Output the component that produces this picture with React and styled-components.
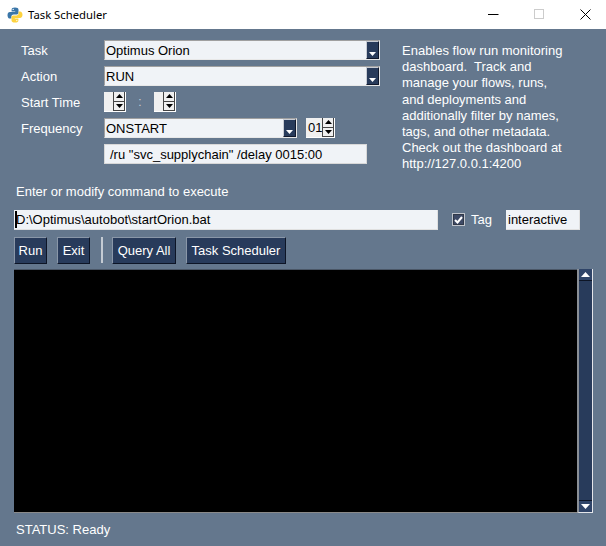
import React from 'react';
import styled, { createGlobalStyle } from 'styled-components';

const GlobalStyle = createGlobalStyle`
  html, body { margin: 0; padding: 0; background: #64778d; }
  * { box-sizing: border-box; }
`;

const Window = styled.div`
  width: 606px;
  height: 546px;
  display: flex;
  flex-direction: column;
  overflow: hidden;
  background: #64778d;
  color: #fff;
  font-family: "Liberation Sans", Arial, sans-serif;
  font-size: 13px;
`;

const TitleBar = styled.div`
  height: 29px;
  flex: none;
  display: flex;
  align-items: center;
  background: #fff;
  color: #000;
  font-family: "Noto Sans", sans-serif;
  font-size: 11.3px;
  padding-left: 7px;
`;

const AppName = styled.span`
  margin-left: 5px;
  flex: 1;
`;

const WinButton = styled.div`
  width: 46px;
  height: 29px;
  flex: none;
  display: flex;
  align-items: center;
  justify-content: center;
  &:last-child { margin-right: -2px; }
`;

const Top = styled.div`
  display: flex;
  padding: 11px 0 0 21px;
`;

const Form = styled.div`
  width: 381px;
  flex: none;
  display: flex;
  flex-direction: column;
  gap: 6px;
`;

const Row = styled.div`
  display: flex;
  align-items: center;
  height: 20px;
`;

const Label = styled.div`
  width: 83px;
  flex: none;
`;

const Combo = styled.div`
  width: ${p => p.$w}px;
  height: 20px;
  flex: none;
  display: flex;
  align-items: center;
  justify-content: space-between;
  padding-left: 1px;
  color: #000;
  background: #f0f3f7;
  border: 1px solid #a0a0a0;
  border-color: #a0a0a0 #e8e8e8 #e8e8e8 #a0a0a0;
`;

const ComboArrow = styled.div`
  width: 13px;
  height: 18px;
  background: #283b5b;
  border: 1px solid #10182c;
  border-top-color: #c8ccd4;
  border-left-color: #c8ccd4;
  display: flex;
  align-items: flex-end;
  justify-content: center;
  padding-bottom: 2px;
`;

const Spinner = styled.div`
  width: ${p => p.$w}px;
  height: 20px;
  flex: none;
  margin-left: ${p => p.$ml || 0}px;
  display: flex;
  justify-content: space-between;
  color: #000;
  background: #f0f0f0;
  border-right: 1px solid #fff;
  border-bottom: 1px solid #fff;
  padding-left: 2px;
  line-height: 19px;
`;

const SpinButtons = styled.div`
  width: 12px;
  height: 100%;
  display: flex;
  flex-direction: column;
  background: #f0f0f0;
  border: 1px solid #444;
  border-top: none;
`;

const SpinPart = styled.div`
  flex: 1;
  display: flex;
  align-items: center;
  justify-content: center;
  &:first-child { border-bottom: 1px solid #444; }
`;

const Colon = styled.span`
  width: 28px;
  text-align: center;
  color: #c8ccd4;
  font-size: 12px;
`;

const ArgsField = styled.div`
  width: 263px;
  height: 20px;
  margin-left: 83px;
  padding-left: 5px;
  display: flex;
  align-items: center;
  color: #000;
  background: #f0f3f7;
  border: 1px solid #d8d8d8;
`;

const Description = styled.p`
  margin: 0;
  padding-top: 3px;
  width: 168px;
  line-height: 16.2px;
`;

const Prompt = styled.div`
  margin: 11px 0 0 16px;
  line-height: 16px;
`;

const CommandRow = styled.div`
  display: flex;
  align-items: center;
  height: 20px;
  margin: 10px 0 0 14px;
`;

const TextField = styled.div`
  width: ${p => p.$w}px;
  height: 20px;
  flex: none;
  display: flex;
  align-items: center;
  padding-left: ${p => p.$pl || 0}px;
  color: #000;
  background: #f0f3f7;
  border-bottom: 1px solid #e0e0e0;
  border-right: 1px solid #e0e0e0;
`;

const Caret = styled.span`
  width: 2px;
  height: 17px;
  background: #000;
  margin-left: 1px;
  margin-right: -1px;
`;

const CheckBox = styled.div`
  width: 13px;
  height: 13px;
  margin: 0 6px 0 14px;
  background: #3e4a66;
  border: 1px solid #c0c4cc;
  outline: 1px solid #303848;
  outline-offset: -2px;
  display: flex;
  align-items: center;
  justify-content: center;
`;

const TagLabel = styled.span`
  width: 35px;
`;

const Buttons = styled.div`
  display: flex;
  align-items: center;
  gap: 10px;
  margin: 7px 0 0 14px;
  height: 27px;
`;

const Button = styled.div`
  height: 27px;
  width: ${p => p.$w}px;
  display: flex;
  align-items: center;
  justify-content: center;
  background: #283b5b;
  border: 1px solid #0d1526;
  border-top-color: #8a97a8;
  border-left-color: #8a97a8;
`;

const Separator = styled.div`
  width: 2px;
  height: 26px;
  margin: 0 -1px 0 1px;
  background: #c4cbd3;
`;

const OutputRow = styled.div`
  display: flex;
  margin: 5px 0 0 14px;
  height: 244px;
`;

const Output = styled.div`
  width: 563px;
  background: #000;
  border-top: 1px solid #4a5666;
  border-bottom: 1px solid #8a8a8a;
`;

const Scrollbar = styled.div`
  width: 16px;
  display: flex;
  flex-direction: column;
  background: #283b5b;
  border-left: 2px solid #8a8f96;
  border-right: 1px solid #e4e6ea;
  border-bottom: 1px solid #e4e6ea;
`;

const ScrollButton = styled.div`
  height: 12px;
  flex: none;
  display: flex;
  align-items: center;
  justify-content: center;
  background: #2f4468;
  border-bottom: ${p => p.$up ? '1px solid #0d1526' : 'none'};
  border-top: ${p => p.$up ? 'none' : '1px solid #0d1526'};
`;

const ScrollTrack = styled.div`
  flex: 1;
`;

const Status = styled.div`
  margin: 9px 0 0 16px;
  line-height: 16px;
`;

const Tri = ({ dir = 'down', color = '#000', w = 7 }) => (
  <svg width={w} height={(w + 1) / 2} viewBox={`0 0 ${w} ${(w + 1) / 2}`}>
    <polygon
      fill={color}
      points={dir === 'up'
        ? `${w / 2},0 ${w},${(w + 1) / 2} 0,${(w + 1) / 2}`
        : `0,0 ${w},0 ${w / 2},${(w + 1) / 2}`}
    />
  </svg>
);

const PythonLogo = () => (
  <svg width="16" height="16" viewBox="0 0 16 16">
    <path fill="#3a76a8" d="M8 0.5C5.6 0.5 4.6 1.4 4.6 2.8V4.4H8.2V5H3C1.5 5 0.5 6.2 0.5 8.2S1.5 11.6 3 11.6H4.4V9.7C4.4 8.4 5.4 7.5 6.6 7.5H9.8C10.8 7.5 11.5 6.7 11.5 5.8V2.8C11.5 1.4 10.3 0.5 8 0.5Z" />
    <path fill="#fdd23e" d="M8 15.5C10.4 15.5 11.4 14.6 11.4 13.2V11.6H7.8V11H13C14.5 11 15.5 9.8 15.5 7.8S14.5 4.4 13 4.4H11.6V6.3C11.6 7.6 10.6 8.5 9.4 8.5H6.2C5.2 8.5 4.5 9.3 4.5 10.2V13.2C4.5 14.6 5.7 15.5 8 15.5Z" />
    <circle cx="6.2" cy="2.4" r="0.7" fill="#fff" />
    <circle cx="9.8" cy="13.6" r="0.7" fill="#fff" />
  </svg>
);

const ComboBox = ({ w, children }) => (
  <Combo $w={w}>
    {children}
    <ComboArrow><Tri color="#fff" w={7} /></ComboArrow>
  </Combo>
);

const Spin = ({ w, ml, children }) => (
  <Spinner $w={w} $ml={ml}>
    <span>{children}</span>
    <SpinButtons>
      <SpinPart><Tri dir="up" /></SpinPart>
      <SpinPart><Tri /></SpinPart>
    </SpinButtons>
  </Spinner>
);

export default function App() {
  return (
    <Window>
      <GlobalStyle />
      <TitleBar>
        <PythonLogo />
        <AppName>Task Scheduler</AppName>
        <WinButton>
          <svg width="11" height="11"><path d="M0 5.5H10.5" stroke="#000" /></svg>
        </WinButton>
        <WinButton>
          <svg width="11" height="11"><rect x="0.5" y="0.5" width="9" height="9" fill="none" stroke="#ccc" /></svg>
        </WinButton>
        <WinButton>
          <svg width="11" height="11"><path d="M0.5 0.5L10.5 10.5M10.5 0.5L0.5 10.5" stroke="#000" /></svg>
        </WinButton>
      </TitleBar>

      <Top>
        <Form>
          <Row>
            <Label>Task</Label>
            <ComboBox w={276}>Optimus Orion</ComboBox>
          </Row>
          <Row>
            <Label>Action</Label>
            <ComboBox w={276}>RUN</ComboBox>
          </Row>
          <Row>
            <Label>Start Time</Label>
            <Spin w={22} />
            <Colon>:</Colon>
            <Spin w={22} />
          </Row>
          <Row>
            <Label>Frequency</Label>
            <ComboBox w={193}>ONSTART</ComboBox>
            <Spin w={29} ml={9}>01</Spin>
          </Row>
          <Row>
            <ArgsField>/ru "svc_supplychain" /delay 0015:00</ArgsField>
          </Row>
        </Form>
        <Description>
          Enables flow run monitoring dashboard.&nbsp; Track and manage your flows, runs, and deployments and additionally filter by names, tags, and other metadata. Check out the dashboard at http://127.0.0.1:4200
        </Description>
      </Top>

      <Prompt>Enter or modify command to execute</Prompt>

      <CommandRow>
        <TextField $w={424}><Caret />D:\Optimus\autobot\startOrion.bat</TextField>
        <CheckBox>
          <svg width="9" height="8" viewBox="0 0 9 8"><path d="M1 4L3.5 6.5L8 1" fill="none" stroke="#fff" strokeWidth="2" /></svg>
        </CheckBox>
        <TagLabel>Tag</TagLabel>
        <TextField $w={74} $pl={2}>interactive</TextField>
      </CommandRow>

      <Buttons>
        <Button $w={33}>Run</Button>
        <Button $w={33}>Exit</Button>
        <Separator />
        <Button $w={64}>Query All</Button>
        <Button $w={100}>Task Scheduler</Button>
      </Buttons>

      <OutputRow>
        <Output />
        <Scrollbar>
          <ScrollButton $up><Tri dir="up" color="#fff" w={9} /></ScrollButton>
          <ScrollTrack />
          <ScrollButton><Tri color="#fff" w={9} /></ScrollButton>
        </Scrollbar>
      </OutputRow>

      <Status>STATUS: Ready</Status>
    </Window>
  );
}
